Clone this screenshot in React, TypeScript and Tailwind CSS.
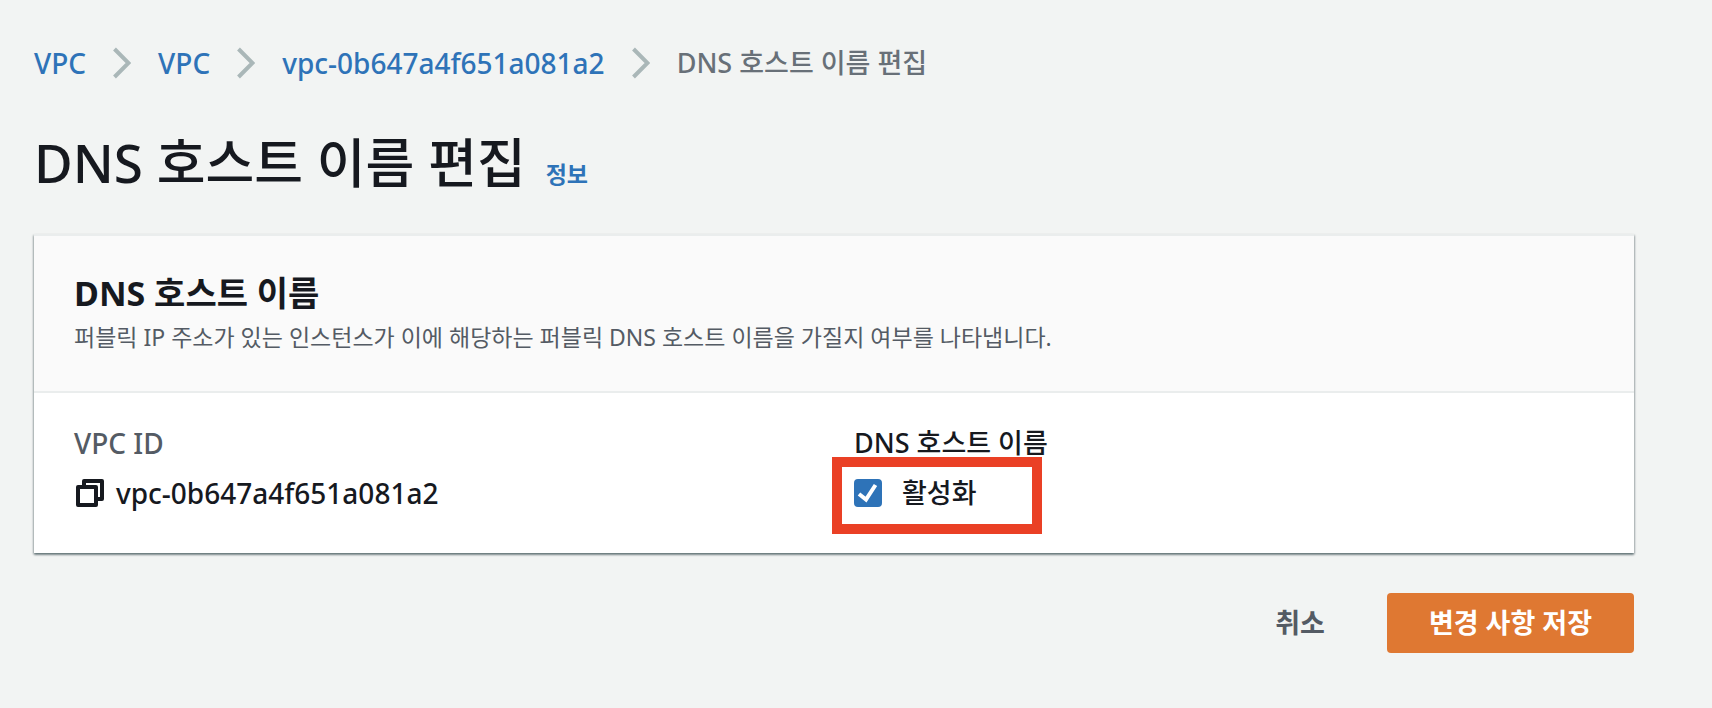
import React, { useState } from 'react';

const VPC_ID = 'vpc-0b647a4f651a081a2';

const breadcrumbs = ['VPC', 'VPC', VPC_ID];

const ChevronIcon: React.FC = () => (
  <svg width="18" height="32" viewBox="0 0 18 32" fill="none" aria-hidden="true">
    <path d="M1.5 2 15.5 16 1.5 30" stroke="#aab7b8" strokeWidth="4" />
  </svg>
);

const CopyIcon: React.FC = () => (
  <svg width="28" height="28" viewBox="0 0 28 28" fill="none" aria-hidden="true">
    <path d="M8 8V2h18v18h-6" stroke="#16191f" strokeWidth="4" strokeLinejoin="round" />
    <path d="M2 8h18v18H2z" stroke="#16191f" strokeWidth="4" strokeLinejoin="round" />
  </svg>
);

const Breadcrumbs: React.FC = () => (
  <nav aria-label="breadcrumb">
    <ol className="flex flex-wrap items-center text-[28px] leading-10">
      {breadcrumbs.map((label, index) => (
        <li key={index} className="flex items-center">
          <a href="#" className="text-[#2e73b8]">{label}</a>
          <span className="mx-[27px]">
            <ChevronIcon />
          </span>
        </li>
      ))}
      <li className="text-[27px] text-[#687078]" aria-current="page">
        DNS 호스트 이름 편집
      </li>
    </ol>
  </nav>
);

interface CheckboxProps {
  id: string;
  label: string;
  checked: boolean;
  onChange: (checked: boolean) => void;
}

const Checkbox: React.FC<CheckboxProps> = ({ id, label, checked, onChange }) => (
  <div className="flex items-center gap-5">
    <span className="grid size-7">
      <input
        id={id}
        type="checkbox"
        checked={checked}
        onChange={(e) => onChange(e.target.checked)}
        className="col-start-1 row-start-1 size-7 appearance-none rounded border-2 border-[#687078] bg-white checked:border-[#2e73b8] checked:bg-[#2e73b8]"
      />
      {checked && (
        <svg
          className="pointer-events-none col-start-1 row-start-1"
          width="28"
          height="28"
          viewBox="0 0 28 28"
          fill="none"
          aria-hidden="true"
        >
          <path d="M5 15 12 20.5 21.5 6" stroke="#fff" strokeWidth="4" />
        </svg>
      )}
    </span>
    <label htmlFor={id} className="text-[27px]">{label}</label>
  </div>
);

export default function App() {
  const [enabled, setEnabled] = useState(true);

  return (
    <main className="min-h-screen bg-[#f2f4f3] pt-[43px] pr-[78px] pb-10 pl-[34px] font-['Noto_Sans','Noto_Sans_CJK_KR',sans-serif] font-medium text-[#16191f]">
      <Breadcrumbs />

      <header className="mt-10 flex items-baseline gap-5">
        <h1 className="text-[53px] leading-[80px]">DNS 호스트 이름 편집</h1>
        <a href="#" className="text-[23px] font-bold text-[#2e73b8]">정보</a>
      </header>

      <section className="mt-[31px] bg-white shadow-[0_2px_2px_0_rgba(0,28,36,0.4),1px_1px_2px_0_rgba(0,28,36,0.2),-1px_1px_2px_0_rgba(0,28,36,0.2)]">
        <div className="border-y-2 border-[#eaeded] bg-[#fafafa] px-10 pt-9 pb-9">
          <h2 className="text-[34px] leading-[42px] font-bold">DNS 호스트 이름</h2>
          <p className="mt-[5px] text-[23px] leading-9 font-normal text-[#545b64]">
            퍼블릭 IP 주소가 있는 인스턴스가 이에 해당하는 퍼블릭 DNS 호스트 이름을 가질지 여부를 나타냅니다.
          </p>
        </div>

        <div className="grid grid-cols-2 gap-x-10 px-10 pt-[30px] pb-10">
          <div className="leading-10">
            <div className="text-[28px] text-[#545b64]">VPC ID</div>
            <div className="mt-[10px] flex items-center gap-3">
              <button type="button" aria-label="복사" className="ml-0.5">
                <CopyIcon />
              </button>
              <span className="text-[28px]">{VPC_ID}</span>
            </div>
          </div>
          <div className="relative leading-10">
            <div className="text-[27px]">DNS 호스트 이름</div>
            <div className="mt-[10px]">
              <Checkbox
                id="dns-hostnames"
                label="활성화"
                checked={enabled}
                onChange={setEnabled}
              />
            </div>
            {/* highlight frame around the checkbox */}
            <div className="pointer-events-none absolute top-[34px] -left-[22px] h-[77px] w-[210px] border-10 border-[#ea4025]" />
          </div>
        </div>
      </section>

      <div className="mt-10 flex items-center justify-end gap-5 text-[27px] font-bold">
        <button type="button" className="h-[60px] px-[42px] text-[#545b64]">취소</button>
        <button type="button" className="h-[60px] rounded bg-[#df7832] px-[42px] text-white">
          변경 사항 저장
        </button>
      </div>
    </main>
  );
}
